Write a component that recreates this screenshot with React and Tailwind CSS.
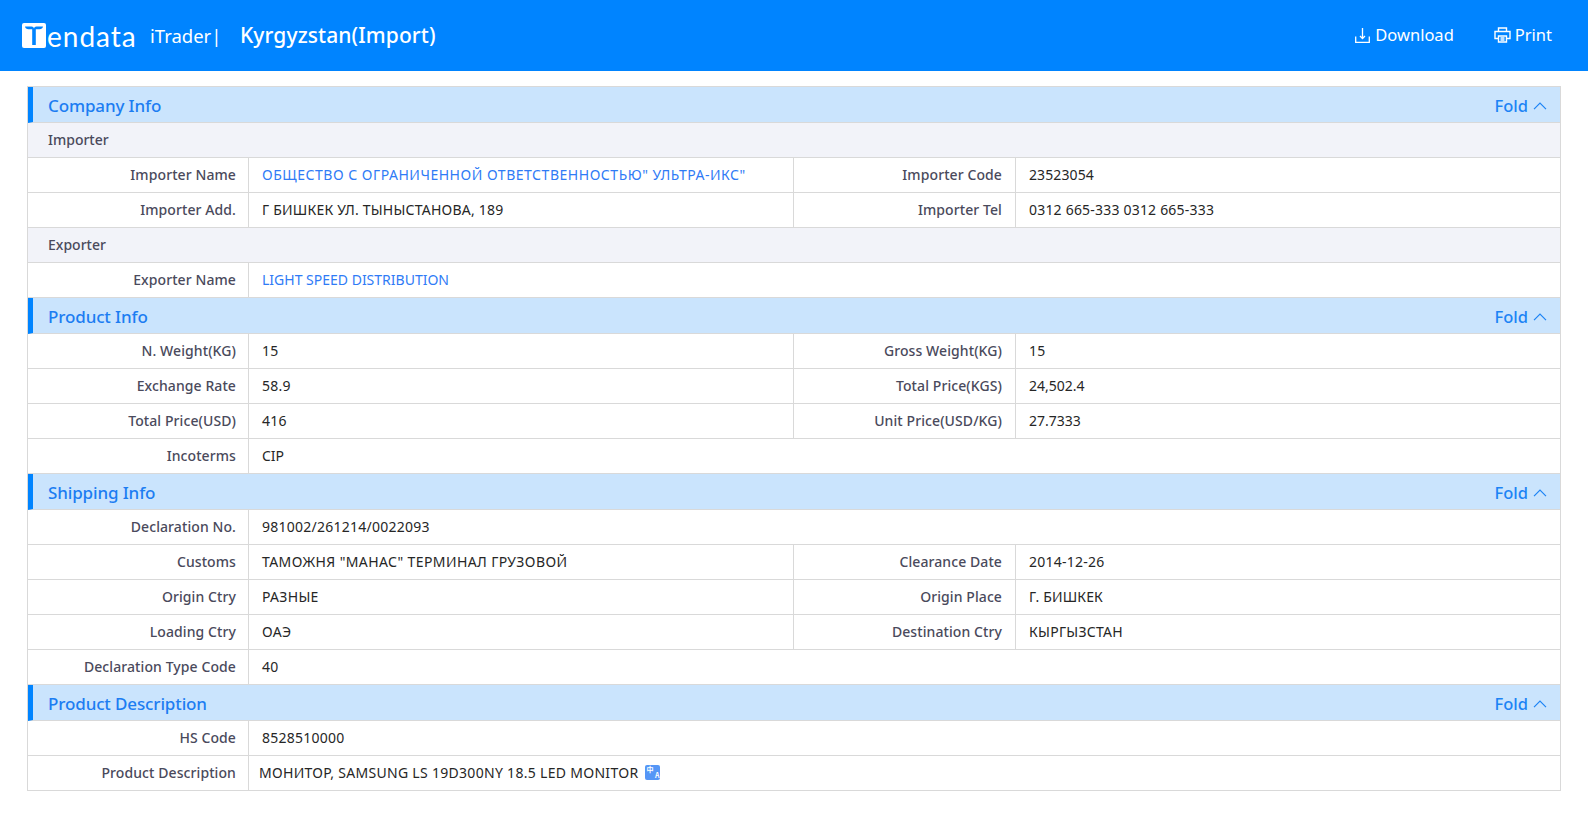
import React from "react";

const FONT = "font-['Noto_Sans','Open_Sans',sans-serif]";
const B = "border-[#d9d9d9]";

function Label({ children, wide }) {
  return (
    <div className={`${wide ? "w-[222px] pr-[13px]" : "w-[221px] pr-[12px]"} shrink-0 flex items-center justify-end pb-[2px] text-[14px] font-medium tracking-[0.09px] text-[#4a4a5c] border-r ${B}`}>
      {children}
    </div>
  );
}

function Value({ children, link, grow, extra, t }) {
  return (
    <div className={`flex items-center pl-[13px] pb-[2px] text-[14px] ${t || ""} ${link ? "text-[#2f7bf6]" : "text-[#262626]"} ${grow ? "flex-1" : "w-[545px] shrink-0"} ${extra || ""}`}>
      {children}
    </div>
  );
}

function Row({ a, b, linkA }) {
  return (
    <div className={`flex h-[35px] border-b ${B}`}>
      <Label>{a[0]}</Label>
      {b ? (
        <>
          <Value link={linkA} t={a[2]} extra={`border-r ${B}`}>{a[1]}</Value>
          <Label wide>{b[0]}</Label>
          <Value grow t={b[2]}>{b[1]}</Value>
        </>
      ) : (
        <Value link={linkA} t={a[2]} grow>{a[1]}</Value>
      )}
    </div>
  );
}

function SubHead({ children }) {
  return (
    <div className={`flex items-center h-[35px] pl-[20px] pb-[2px] bg-[#f2f3f9] text-[14px] font-medium text-[#4a4a5c] border-b ${B}`}>
      {children}
    </div>
  );
}

function Section({ title, children }) {
  return (
    <section>
      <div className={`flex items-center justify-between h-[36px] bg-[#cae4fd] border-l-[5px] border-l-[#0084ff] border-b ${B} pl-[15px] pr-[13px]`}>
        <span className="pt-[2px] text-[17px] font-medium tracking-[-0.13px] text-[#1c7df2]">{title}</span>
        <span className="flex items-center gap-[5px] pt-[3px] text-[16.5px] font-medium text-[#1c83f5]">
          Fold
          <svg width="14" height="8" viewBox="0 0 14 8" fill="none" stroke="#1c83f5" strokeWidth="1.2">
            <path d="M1 7.2 7 1.2l6 6" />
          </svg>
        </span>
      </div>
      {children}
    </section>
  );
}

export default function App() {
  return (
    <div className={`${FONT} bg-white min-h-[818px] w-full`}>
      <header className="flex items-center justify-between h-[71px] bg-[#0084ff] pl-[22px] pr-[36px] text-white">
        <div className="flex items-center">
          <div className="flex items-center w-[128px]">
            <svg width="24" height="25" viewBox="0 0 24 25" className="shrink-0">
              <rect width="24" height="25" rx="2" fill="#fff" />
              <path d="M3 3.5h6.5c1.5 0 2.2.8 2.5 2 .3-1.2 1-2 2.5-2H21c-.3 1.8-1.5 2.8-3.5 2.8h-3.7V22h-3.6V6.3H6.5C4.5 6.3 3.3 5.3 3 3.5z" fill="#0084ff" />
            </svg>
            <span className="font-['Lato',sans-serif] text-[28px] tracking-[1px] leading-none font-normal ml-[1px]">endata</span>
          </div>
          <span className="text-[18.5px] font-normal w-[90px]">iTrader|</span>
          <h1 className="text-[21px] font-medium tracking-[0.1px]">Kyrgyzstan(Import)</h1>
        </div>
        <div className="flex items-center pb-[1px] text-[16.5px]">
          <span className="flex items-center gap-[5px]">
            <svg width="15" height="15" viewBox="0 0 15 15" fill="none" stroke="#fff" strokeWidth="1.3">
              <path d="M7.5 0v10.5M5 8l2.5 2.6L10 8M.7 8.5v5.8h13.6V8.5" />
            </svg>
            Download
          </span>
          <span className="flex items-center gap-[4px] ml-[40px]">
            <svg width="17" height="16" viewBox="0 0 17 16" fill="none" stroke="#fff" strokeWidth="1.4">
              <path d="M4.5 4V1h8v3M4 11.5H1V4.5h15v7h-3" />
              <path d="M4.5 9h8v6h-8zM6.5 11h4M6.5 13h4" />
            </svg>
            Print
          </span>
        </div>
      </header>

      <main className="pt-[15px] px-[27px]">
        <div className={`border ${B} border-b-0`}>
          <Section title="Company Info">
            <SubHead>Importer</SubHead>
            <Row linkA a={["Importer Name", 'ОБЩЕСТВО С ОГРАНИЧЕННОЙ ОТВЕТСТВЕННОСТЬЮ" УЛЬТРА-ИКС"', "tracking-[0.52px]"]} b={["Importer Code", "23523054", "tracking-[0.1px]"]} />
            <Row a={["Importer Add.", "Г БИШКЕК УЛ. ТЫНЫСТАНОВА, 189", "tracking-[0.22px]"]} b={["Importer Tel", "0312 665-333 0312 665-333", "tracking-[0.2px]"]} />
            <SubHead>Exporter</SubHead>
            <Row linkA a={["Exporter Name", "LIGHT SPEED DISTRIBUTION"]} />
          </Section>
          <Section title="Product Info">
            <Row a={["N. Weight(KG)", "15", "tracking-[0.25px]"]} b={["Gross Weight(KG)", "15", "tracking-[0.25px]"]} />
            <Row a={["Exchange Rate", "58.9", "tracking-[0.25px]"]} b={["Total Price(KGS)", "24,502.4"]} />
            <Row a={["Total Price(USD)", "416", "tracking-[0.25px]"]} b={["Unit Price(USD/KG)", "27.7333"]} />
            <Row a={["Incoterms", "CIP"]} />
          </Section>
          <Section title="Shipping Info">
            <Row a={["Declaration No.", "981002/261214/0022093", "tracking-[0.25px]"]} />
            <Row a={["Customs", 'ТАМОЖНЯ "МАНАС" ТЕРМИНАЛ ГРУЗОВОЙ', "tracking-[0.4px]"]} b={["Clearance Date", "2014-12-26", "tracking-[0.25px]"]} />
            <Row a={["Origin Ctry", "РАЗНЫЕ", "tracking-[0.3px]"]} b={["Origin Place", "Г. БИШКЕК", "tracking-[0.13px]"]} />
            <Row a={["Loading Ctry", "ОАЭ", "tracking-[0.3px]"]} b={["Destination Ctry", "КЫРГЫЗСТАН", "tracking-[0.26px]"]} />
            <Row a={["Declaration Type Code", "40", "tracking-[0.25px]"]} />
          </Section>
          <Section title="Product Description">
            <Row a={["HS Code", "8528510000", "tracking-[0.25px]"]} />
            <Row
              a={[
                "Product Description",
                <span className="flex items-center -ml-[3px] tracking-[0.3px]">
                  МОНИТОР, SAMSUNG LS 19D300NY 18.5 LED MONITOR
                  <span className="ml-[7px] flex flex-col justify-center gap-0 pl-[1px] w-[15px] h-[15px] rounded-[2px] bg-[#5596f6] text-white text-[7px] leading-[6.5px] font-bold tracking-normal font-['Noto_Sans_CJK_SC','Noto_Sans',sans-serif]">
                    <span className="self-start">中</span>
                    <span className="self-end pr-[1px]">A</span>
                  </span>
                </span>,
              ]}
            />
          </Section>
        </div>
      </main>
    </div>
  );
}
